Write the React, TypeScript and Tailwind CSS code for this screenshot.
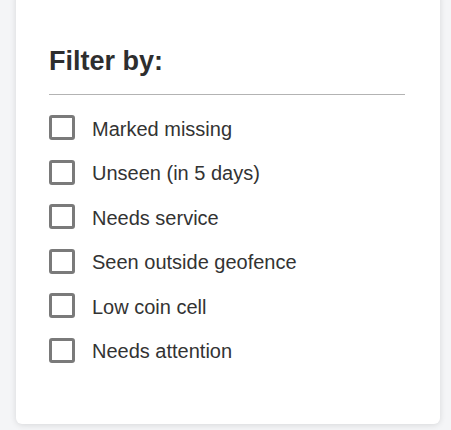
const filters = [
  'Marked missing',
  'Unseen (in 5 days)',
  'Needs service',
  'Seen outside geofence',
  'Low coin cell',
  'Needs attention',
];

export default function App() {
  return (
    <div
      className="h-[430px] w-[451px] overflow-hidden bg-[#f4f5f7] pl-[16px]"
      style={{ fontFamily: '"Liberation Sans", Arial, sans-serif' }}
    >
      <div className="-mt-[10px] h-[434px] w-[424px] rounded-[6px] bg-white pl-[33px] pr-[35px] pt-[58px] shadow-[0_1px_6px_rgba(0,0,0,0.12)]">
        <h2 className="border-b border-[#b3b3b3] pb-[19px] text-[27px] font-bold leading-none text-[#2e2e2e]">
          Filter by:
        </h2>
        <div className="mt-[20px] flex flex-col gap-[19.6px]">
          {filters.map((label) => (
            <label key={label} className="flex items-center gap-[17px]">
              <span className="h-[25px] w-[26px] shrink-0 rounded-[3px] border-[3px] border-[#7a7a7a] bg-white" />
              <span className="mt-[2px] text-[20px] leading-none text-[#333]">{label}</span>
            </label>
          ))}
        </div>
      </div>
    </div>
  );
}
